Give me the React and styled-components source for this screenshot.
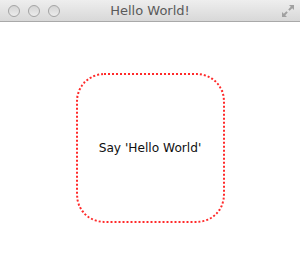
import React from 'react';
import styled, { createGlobalStyle } from 'styled-components';

const GlobalStyle = createGlobalStyle`
  html, body {
    margin: 0;
    padding: 0;
    background: #ffffff;
  }
  body {
    font-family: 'Lucida Grande', 'DejaVu Sans', 'Noto Sans', sans-serif;
  }
`;

const App = () => {
  return (
    <>
      <GlobalStyle />
      <Window>
        <TitleBar>
          <Side>
            <Light />
            <Light />
            <Light />
          </Side>
          <Title>Hello World!</Title>
          <Side $right>
            <svg width="14" height="14" viewBox="0 0 14 14">
              <path d="M8 1h5v5l-1.8-1.8-2.6 2.6-1.4-1.4 2.6-2.6z" fill="#a0a0a0" />
              <path d="M6 13H1V8l1.8 1.8 2.6-2.6 1.4 1.4-2.6 2.6z" fill="#a0a0a0" />
            </svg>
          </Side>
        </TitleBar>
        <Content>
          <HelloBox>Say 'Hello World'</HelloBox>
        </Content>
      </Window>
    </>
  );
};

export default App;

const Window = styled.div`
  width: 300px;
  height: 272px;
  display: flex;
  flex-direction: column;
  background: #ffffff;
`;

const TitleBar = styled.div`
  height: 21px;
  flex-shrink: 0;
  display: flex;
  align-items: center;
  background: linear-gradient(180deg, #eeeeee, #d8d8d8);
  border-bottom: 1px solid #a9a9a9;
`;

const Side = styled.div`
  width: 70px;
  display: flex;
  align-items: center;
  justify-content: ${(p) => (p.$right ? 'flex-end' : 'flex-start')};
  gap: 8px;
  padding: ${(p) => (p.$right ? '0 5px 0 0' : '0 0 0 8px')};
  box-sizing: border-box;
`;

const Light = styled.span`
  width: 10px;
  height: 10px;
  border-radius: 50%;
  border: 1px solid #a4a4a4;
  background: linear-gradient(180deg, #d4d4d4, #ececec);
`;

const Title = styled.div`
  flex: 1;
  text-align: center;
  font-size: 13px;
  color: #5a5a5a;
`;

const Content = styled.div`
  flex: 1;
  display: flex;
  justify-content: center;
  padding-top: 51px;
`;

const HelloBox = styled.div`
  width: 145px;
  height: 146px;
  border: 2px dotted #ff2a2a;
  border-radius: 28px;
  display: flex;
  align-items: center;
  justify-content: center;
  font-size: 12.2px;
  color: #111111;
`;
